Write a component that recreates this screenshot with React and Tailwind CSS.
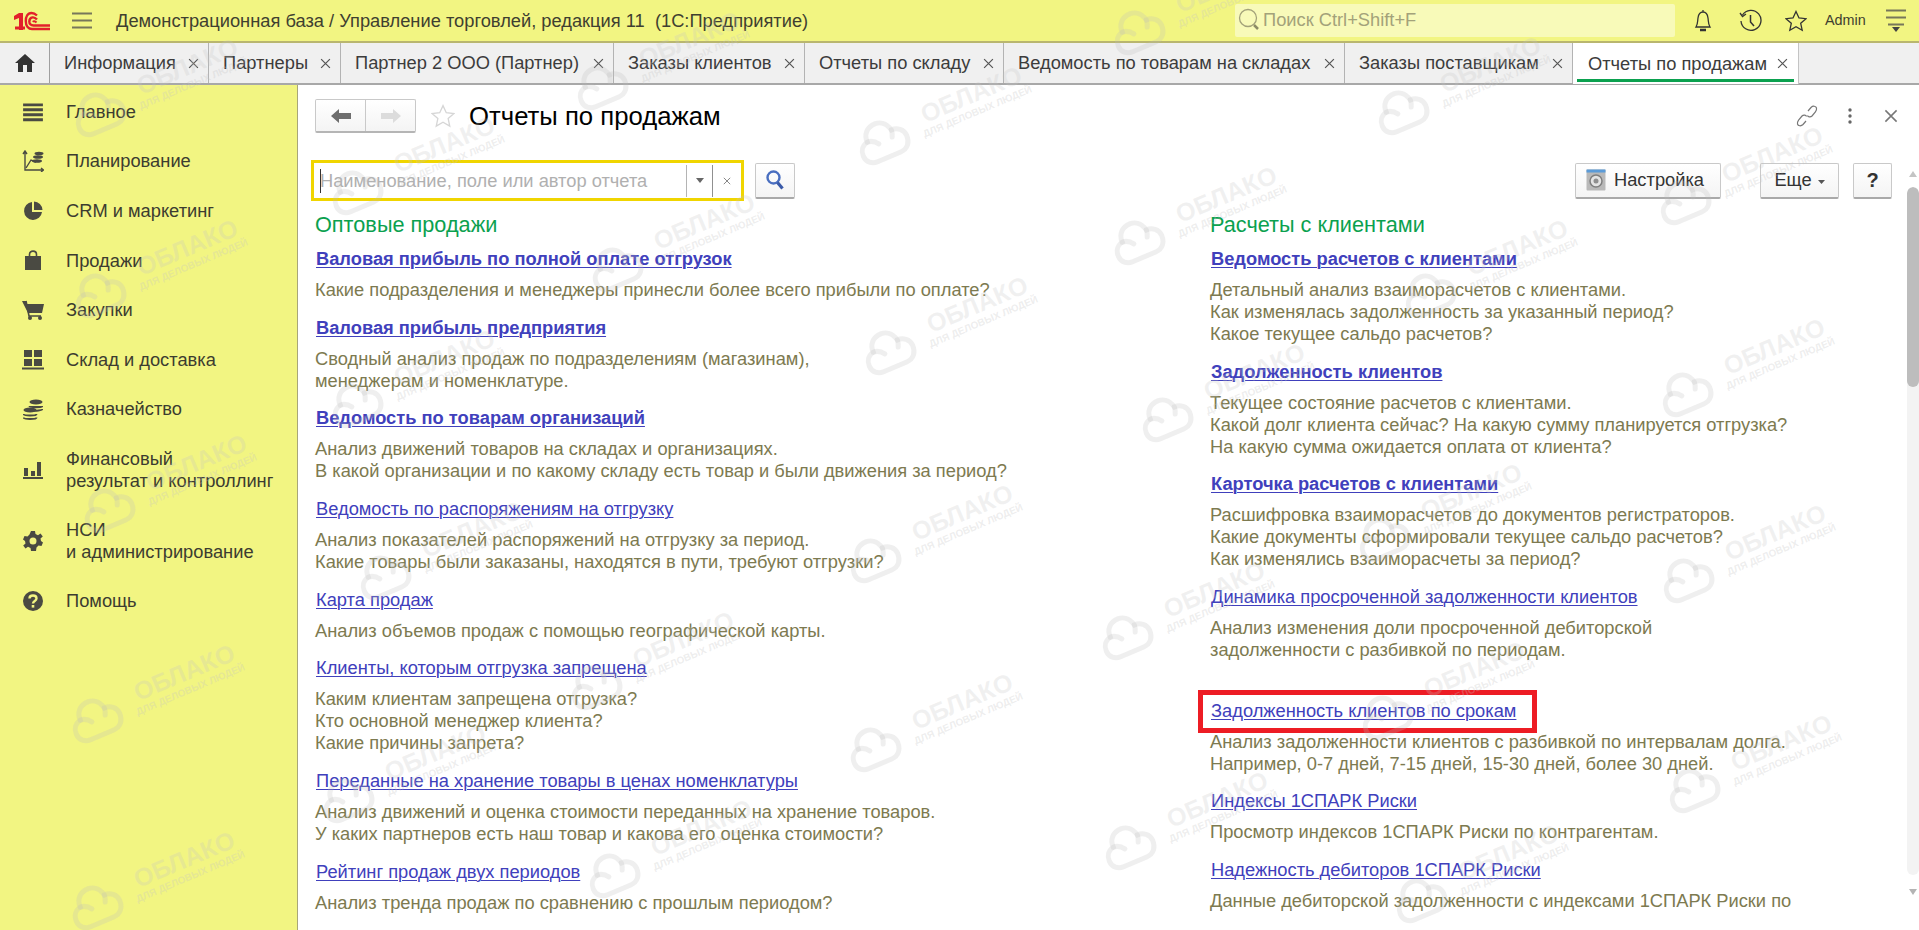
import React from "react";

const clouds = [
  [99,113],[99,294],[108,509],[96,719],[96,906],
  [356,191],[356,404],[384,576],[347,799],
  [601,86],[616,268],[595,686],[613,874],
  [883,141],[889,351],[874,559],[874,748],
  [1138,31],[1138,241],[1166,418],[1126,636],[1129,846],
  [1402,111],[1429,294],[1383,538],[1386,716],[1420,899],
  [1684,201],[1686,393],[1687,579],[1693,789],
];

function Watermark({ x, y }) {
  return (
    <div className="absolute w-0 h-0" style={{ left: x, top: y }}>
      <svg className="absolute -left-[27px] -top-[23px] -rotate-[23deg]" width="54" height="46" viewBox="0 0 54 46" fill="none" stroke="#bdbdbd" strokeOpacity="0.24" strokeWidth="5" strokeLinecap="round">
        <path d="M14 40H39C47 40 51 34 51 27C51 20 45 16 39 16C37 7 31 4 26 4C17 4 12 10 12 18C6 19 3 24 3 29C3 36 8 40 14 40" />
        <path d="M12 18C17 18 20 21 22 24M39 16C39 19 38 21 37 23" />
      </svg>
      <div className="absolute left-[33px] -top-[62px] w-[110px] text-center font-bold text-[25px] leading-[30px] text-[#c4c4c4]/25 -rotate-[23deg] whitespace-nowrap">ОБЛАКО</div>
      <div className="absolute left-[36px] -top-[35px] w-[116px] text-center font-bold text-[10px] leading-[12px] text-[#c4c4c4]/30 -rotate-[23deg] whitespace-nowrap">ДЛЯ ДЕЛОВЫХ ЛЮДЕЙ</div>
    </div>
  );
}

const Logo = () => (
  <svg width="38" height="20" viewBox="0 0 38 20" fill="none">
    <path d="M1 5L6 2H10V19H6V7L1 9Z" fill="#e2202b" />
    <path d="M2 17H12" stroke="#e2202b" strokeWidth="3" />
    <path d="M24 4.500C22 2.600 20 2 18.500 2C14.500 2 12.800 6 12.800 10C12.800 15 15.500 18 19 18H37" stroke="#e2202b" strokeWidth="2.400" />
    <path d="M24 8.500C22.500 6.800 21 6.200 19.500 6.400C17 6.800 16.300 9 16.300 10.500C16.300 13 18 14.500 20.500 14.500H37" stroke="#e2202b" strokeWidth="2.400" />
    <path d="M23.500 11.500C22 10 20.500 10 20 11" stroke="#e2202b" strokeWidth="2" />
  </svg>
);

const Lines = ({ w = 20, color = "#77775a" }) => (
  <svg width={w} height="17" viewBox="0 0 20 17">
    <path d="M0 1.500H20M0 8.500H20M0 15.500H20" stroke={color} strokeWidth="2" />
  </svg>
);

const X = ({ s = 11, c = "#555" }) => (
  <svg width={s} height={s} viewBox="0 0 10 10" className="shrink-0">
    <path d="M1 1L9 9M9 1L1 9" stroke={c} strokeWidth="1.100" />
  </svg>
);

const side = "#4a4a42";
const icons = {
  main: <svg width="22" height="20" viewBox="0 0 20 18"><path d="M1 2.500H19M1 7H19M1 11.500H19M1 16H19" stroke={side} strokeWidth="2.600" /></svg>,
  plan: <svg width="22" height="22" viewBox="0 0 22 22" fill="none"><path d="M3 1V20H21M1 4L3 1L5 4M19 18L21.500 20L19 22" stroke={side} strokeWidth="1.400"/><path d="M4 18L9 10L14 12" stroke={side} strokeWidth="1.400"/><ellipse cx="17" cy="3.500" rx="4.500" ry="1.800" fill={side}/><ellipse cx="16" cy="7" rx="5" ry="1.800" fill={side}/><ellipse cx="15" cy="11" rx="5" ry="1.800" fill={side}/></svg>,
  crm: <svg width="20" height="20" viewBox="0 0 20 20"><path d="M9 1A9 9 0 1 0 19 11H9Z" fill={side}/><path d="M11 0.500A9 9 0 0 1 19.500 9H11Z" fill={side}/></svg>,
  sales: <svg width="18" height="21" viewBox="0 0 18 21" fill="none"><path d="M1 6H17V20H1Z" fill={side}/><path d="M5.500 8V4.500C5.500 0 12.500 0 12.500 4.500V8" stroke={side} strokeWidth="1.600"/></svg>,
  buy: <svg width="22" height="20" viewBox="0 0 22 20"><path d="M0 1H4L5 4H22L20 13H6Z" fill={side}/><path d="M4 1L7 16H19" stroke={side} strokeWidth="1.600" fill="none"/><circle cx="8" cy="18" r="2" fill={side}/><circle cx="18" cy="18" r="2" fill={side}/></svg>,
  stock: <svg width="22" height="20" viewBox="0 0 22 20"><path d="M2 0H10V7H2ZM12 0H20V7H12ZM2 9H10V16H2ZM12 9H20V16H12ZM0 17.500H22V19.500H0Z" fill={side}/></svg>,
  money: <svg width="20" height="21" viewBox="0 0 20 21" fill="none"><ellipse cx="13" cy="3" rx="6.500" ry="2.500" fill={side}/><path d="M6.500 7C6.500 8.500 19.500 8.500 19.500 7M19.500 10C19.500 11.500 12 12 10 11.500" stroke={side} strokeWidth="2"/><ellipse cx="7" cy="11" rx="6.500" ry="2.500" fill={side}/><path d="M.5 15C.5 17 13.500 17 13.500 15M.5 18.500C.5 20.500 13.500 20.500 13.500 18.500" stroke={side} strokeWidth="2"/></svg>,
  fin: <svg width="20" height="18" viewBox="0 0 20 18"><path d="M1 7H5V15H1ZM8 10H12V15H8ZM14 1H18V15H14ZM0 16H20V18H0Z" fill={side}/></svg>,
  nsi: <svg width="20" height="20" viewBox="0 0 20 20"><path fillRule="evenodd" d="M8 0H12L12.500 3L15 4.200L17.500 2.500L19.800 5.500L17.500 7.500L18 10L20 11.500L18.500 15L15.500 14.500L13.500 16.500L13 20H8L7.500 17L5 15.800L2.500 17.500L.2 14.500L2.500 12.500L2 10L0 8.500L1.500 5L4.500 5.500L6.500 3.500ZM10 6.500A3.500 3.500 0 1 0 10 13.500A3.500 3.500 0 1 0 10 6.500Z" fill={side}/></svg>,
  help: <svg width="20" height="20" viewBox="0 0 20 20"><circle cx="10" cy="10" r="10" fill={side}/><path d="M6.500 7.500C6.500 3.500 13.500 3.500 13.500 7.500C13.500 10 10 10 10 12.500" stroke="#f2f582" strokeWidth="2.400" fill="none"/><rect x="8.700" y="14" width="2.600" height="2.600" fill="#f2f582"/></svg>,
};

const menu = [
  ["main", ["Главное"], "h-[49.600px]"],
  ["plan", ["Планирование"], "h-[49.600px]"],
  ["crm", ["CRM и маркетинг"], "h-[49.600px]"],
  ["sales", ["Продажи"], "h-[49.600px]"],
  ["buy", ["Закупки"], "h-[49.600px]"],
  ["stock", ["Склад и доставка"], "h-[49.600px]"],
  ["money", ["Казначейство"], "h-[49.600px]"],
  ["fin", ["Финансовый", "результат и контроллинг"], "h-[71px]"],
  ["nsi", ["НСИ", "и администрирование"], "h-[71px]"],
  ["help", ["Помощь"], "h-[49.600px]"],
];

const tabs = [
  ["Информация", "w-[159px]"],
  ["Партнеры", "w-[132px]"],
  ["Партнер 2 ООО (Партнер)", "w-[273px]"],
  ["Заказы клиентов", "w-[191px]"],
  ["Отчеты по складу", "w-[199px]"],
  ["Ведомость по товарам на складах", "w-[341px]"],
  ["Заказы поставщикам", "w-[228px]"],
];

const left = [
  ["Валовая прибыль по полной оплате отгрузок", true, ["Какие подразделения и менеджеры принесли более всего прибыли по оплате?"]],
  ["Валовая прибыль предприятия", true, ["Сводный анализ продаж по подразделениям (магазинам),", "менеджерам и номенклатуре."]],
  ["Ведомость по товарам организаций", true, ["Анализ движений товаров на складах и организациях.", "В какой организации и по какому складу есть товар и были движения за период?"]],
  ["Ведомость по распоряжениям на отгрузку", false, ["Анализ показателей распоряжений на отгрузку за период.", "Какие товары были заказаны, находятся в пути, требуют отгрузки?"]],
  ["Карта продаж", false, ["Анализ объемов продаж с помощью географической карты."]],
  ["Клиенты, которым отгрузка запрещена", false, ["Каким клиентам запрещена отгрузка?", "Кто основной менеджер клиента?", "Какие причины запрета?"]],
  ["Переданные на хранение товары в ценах номенклатуры", false, ["Анализ движений и оценка стоимости переданных на хранение товаров.", "У каких партнеров есть наш товар и какова его оценка стоимости?"]],
  ["Рейтинг продаж двух периодов", false, ["Анализ тренда продаж по сравнению с прошлым периодом?"]],
];

const right = [
  ["Ведомость расчетов с клиентами", true, ["Детальный анализ взаиморасчетов с клиентами.", "Как изменялась задолженность за указанный период?", "Какое текущее сальдо расчетов?"]],
  ["Задолженность клиентов", true, ["Текущее состояние расчетов с клиентами.", "Какой долг клиента сейчас? На какую сумму планируется отгрузка?", "На какую сумма ожидается оплата от клиента?"]],
  ["Карточка расчетов с клиентами", true, ["Расшифровка взаиморасчетов до документов регистраторов.", "Какие документы сформировали текущее сальдо расчетов?", "Как изменялись взаиморасчеты за период?"]],
  ["Динамика просроченной задолженности клиентов", false, ["Анализ изменения доли просроченной дебиторской", "задолженности с разбивкой по периодам."], "mb-[38.700px]"],
  ["Задолженность клиентов по срокам", false, ["Анализ задолженности клиентов с разбивкой по интервалам долга.", "Например, 0-7 дней, 7-15 дней, 15-30 дней, более 30 дней."], "", true],
  ["Индексы 1СПАРК Риски", false, ["Просмотр индексов 1СПАРК Риски по контрагентам."]],
  ["Надежность дебиторов 1СПАРК Риски", false, ["Данные дебиторской задолженности с индексами 1СПАРК Риски по"]],
];

function Item({ item }) {
  const [title, bold, lines, extra, marked] = item;
  return (
    <div className={extra || "mb-[15.700px]"}>
      <div className="relative mb-[9px] h-[22px] leading-[22px] pl-[1px]">
        <a className={`underline underline-offset-2 decoration-1 text-[#4040bc] whitespace-nowrap ${bold ? "font-bold" : ""}`}>{title}</a>
        {marked && <div className="absolute -left-[12px] -top-[10px] w-[339px] h-[43px] border-[5px] border-[#ed1c24]" />}
      </div>
      {lines.map((l) => (
        <div key={l} className="h-[22px] leading-[22px] text-[#7d7a50] whitespace-nowrap">{l}</div>
      ))}
    </div>
  );
}

function Column({ title, items, className }) {
  return (
    <div className={className}>
      <div className="text-[21.700px] leading-[26px] h-[26px] text-[#0ba14f] mb-[10px]">{title}</div>
      {items.map((i) => <Item key={i[0]} item={i} />)}
    </div>
  );
}

const btn = "flex items-center justify-center h-[35px] rounded-[2px] border border-[#c9c9c9] border-b-[#a9a9a9] border-b-2 bg-gradient-to-b from-white to-[#f4f4f4] text-[#333]";

export default function App() {
  return (
    <div className="relative h-[930px] overflow-hidden bg-white text-[18.300px] font-['Liberation_Sans',Arial,sans-serif]">
      <header className="flex items-center h-[43px] bg-[#f2f582] border-b-2 border-b-[#b9b66f] text-[#3f3f30]">
        <div className="ml-[13px] w-[38px] flex"><Logo /></div>
        <div className="ml-[21px] flex"><Lines /></div>
        <div className="ml-[24px] whitespace-pre">Демонстрационная база / Управление торговлей, редакция 11  (1С:Предприятие)</div>
        <div className="ml-auto w-[440px] h-[33px] -mt-[1px] rounded-[2px] bg-[#f8fab9] flex items-center text-[#a3a27a]">
          <svg width="24" height="26" viewBox="0 0 24 26" fill="none" className="ml-[3px]"><circle cx="10" cy="11" r="8.500" stroke="#a3a27a" strokeWidth="1.300"/><path d="M16 18L20 22" stroke="#8c8b66" strokeWidth="2.500"/></svg>
          <span className="ml-[1px]">Поиск Ctrl+Shift+F</span>
        </div>
        <div className="ml-[18px] w-[20px] flex">
          <svg width="20" height="26" viewBox="0 0 20 26" fill="none" stroke="#333" strokeWidth="1.300"><path d="M10 2V4M3 19C5 16 4.500 13 5 10C5.500 6 7.500 4 10 4C12.500 4 14.500 6 15 10C15.500 13 15 16 17 19Z"/><path d="M7 22H13" strokeWidth="2.500"/></svg>
        </div>
        <div className="ml-[25px] w-[26px] flex">
          <svg width="24" height="24" viewBox="0 0 24 24" fill="none" stroke="#333" strokeWidth="1.300"><path d="M4.500 6A10 10 0 1 1 3 12"/><path d="M2 4L4.500 7.500L8 5" /><path d="M12.500 6V13L16 17" strokeWidth="1.500"/></svg>
        </div>
        <div className="ml-[21px] w-[22px] flex">
          <svg width="22" height="22" viewBox="0 0 22 22" fill="none" stroke="#333" strokeWidth="1.300"><path d="M11 1.500L14 8L21 8.700L15.700 13.300L17.200 20.300L11 16.700L4.800 20.300L6.300 13.300L1 8.700L8 8Z"/></svg>
        </div>
        <div className="ml-[18px] text-[14.400px] w-[43px]">Admin</div>
        <div className="ml-[18px] mr-[13px] w-[20px] flex flex-col items-center">
          <svg width="20" height="24" viewBox="0 0 20 24"><path d="M0 1.500H20M0 8.500H20M2 15.500H18" stroke="#77775a" strokeWidth="1.800"/><path d="M6 18H14L10 23Z" fill="#444"/></svg>
        </div>
      </header>

      <nav className="flex h-[42px] bg-[#f0f0f0] border-b-2 border-b-[#a8a8a8] text-[#3c3c3c]">
        <div className="w-[50px] shrink-0 border-r border-r-[#9f9f9f] flex items-center justify-center">
          <svg width="20" height="18" viewBox="0 0 20 18"><path d="M10 0L20 9H17V18H12V11H8V18H3V9H0Z" fill="#333"/></svg>
        </div>
        {tabs.map(([t, w]) => (
          <div key={t} className={`${w} shrink-0 border-r border-r-[#b3b3b3] pl-[14px] pr-[9px] flex items-center justify-between whitespace-nowrap`}>
            <span>{t}</span><X />
          </div>
        ))}
        <div className="relative w-[226px] shrink-0 -mb-[1px] bg-white border-r border-r-[#c4c4c4] pl-[15px] pr-[10px] flex items-center justify-between whitespace-nowrap">
          <span>Отчеты по продажам</span><X />
          <div className="absolute left-[4px] right-[4px] bottom-[2px] h-[3px] bg-[#0ba14f]" />
        </div>
      </nav>

      <div className="flex h-[845px]">
        <aside className="w-[298px] shrink-0 bg-[#f2f582] border-r border-r-[#a8a679] pt-[2px] text-[#3c3c30]">
          {menu.map(([ic, lines, h]) => (
            <div key={ic} className={`flex items-center ${h}`}>
              <div className="w-[66px] pl-[22px] pr-[22px] flex items-center justify-center shrink-0">{icons[ic]}</div>
              <div className="leading-[22px] whitespace-nowrap">{lines.map((l) => <div key={l}>{l}</div>)}</div>
            </div>
          ))}
        </aside>

        <main className="relative flex-1 min-w-0">
          <div className="flex items-center h-[34px] mt-[14px] pl-[17px] pr-[21px]">
            <div className="flex w-[101px] h-[34px] rounded-[2px] border border-[#c9c9c9] border-b-2 border-b-[#b5b5b5] bg-gradient-to-b from-white to-[#f4f4f4]">
              <div className="w-[50px] border-r border-r-[#c9c9c9] flex items-center justify-center">
                <svg width="20" height="14" viewBox="0 0 20 14"><path d="M8 0V4H20V10H8V14L0 7Z" fill="#6e6e6e"/></svg>
              </div>
              <div className="flex-1 flex items-center justify-center">
                <svg width="20" height="14" viewBox="0 0 20 14"><path d="M12 0V4H0V10H12V14L20 7Z" fill="#dcdcdc"/></svg>
              </div>
            </div>
            <svg width="24" height="24" viewBox="0 0 22 22" fill="none" stroke="#d6d6d6" strokeWidth="1.200" className="ml-[15px]"><path d="M11 1.500L14 8L21 8.700L15.700 13.300L17.200 20.300L11 16.700L4.800 20.300L6.300 13.300L1 8.700L8 8Z"/></svg>
            <h1 className="ml-[14px] text-[25.700px] text-black leading-[30px] whitespace-nowrap">Отчеты по продажам</h1>
            <svg width="22" height="26" viewBox="0 0 22 26" fill="none" stroke="#777" strokeWidth="1.200" className="ml-auto"><path d="M12 8L15 4.500C17 2.500 20 3 20.500 5C21 7 20 8 19 9.500L16 13C14.500 14.500 12 14 11.500 12.500M10 18L7 21.500C5 23.500 2 23 1.500 21C1 19 2 18 3 16.500L6 13C7.500 11.500 10 12 10.500 13.500"/></svg>
            <svg width="4" height="18" viewBox="0 0 4 18" className="ml-[30px]"><circle cx="2" cy="3" r="1.700" fill="#666"/><circle cx="2" cy="9" r="1.700" fill="#666"/><circle cx="2" cy="15" r="1.700" fill="#666"/></svg>
            <div className="ml-[32px] flex"><X s={14} c="#777" /></div>
          </div>

          <div className="flex items-center h-[41px] mt-[27px] pl-[13px] pr-[27px]">
            <div className="relative flex items-center w-[433px] h-[41px] border-[3px] border-[#f0d500] bg-white">
              <div className="absolute left-[6px] top-[6px] w-[1px] h-[24px] bg-[#333]" />
              <span className="ml-[6px] text-[#b0b0b0] whitespace-nowrap w-[366px]">Наименование, поле или автор отчета</span>
              <div className="w-[27px] h-[32px] border-l border-r border-l-[#b4b4b4] border-r-[#909090] flex items-center justify-center">
                <svg width="8" height="5" viewBox="0 0 8 5"><path d="M0 0H8L4 5Z" fill="#666"/></svg>
              </div>
              <div className="flex-1 flex justify-center"><X s={8} c="#777" /></div>
            </div>
            <div className={`${btn} ml-[11px] w-[40px] h-[36px]`}>
              <svg width="20" height="22" viewBox="0 0 20 22" fill="none"><circle cx="8.500" cy="8.500" r="6" stroke="#4a6fc0" strokeWidth="2.400"/><path d="M12.500 13.500L17.500 19.500" stroke="#3a5aa8" strokeWidth="3.200"/></svg>
            </div>
            <div className={`${btn} ml-auto w-[146px] h-[36px] justify-start`}>
              <svg width="20" height="22" viewBox="0 0 20 22" className="ml-[10px]"><rect x="0.500" y="0.500" width="19" height="21" rx="1" fill="#b9b9b9"/><rect x="0.500" y="0.500" width="19" height="3" fill="#5b9bd8"/><circle cx="10" cy="12" r="6" fill="#e4e4e4" stroke="#7f7f7f" strokeWidth="1.500"/><circle cx="10" cy="12" r="2.500" fill="#8f8f8f"/></svg>
              <span className="ml-[8px]">Настройка</span>
            </div>
            <div className={`${btn} ml-[39px] w-[79px] h-[36px]`}>
              <span>Еще</span>
              <svg width="7" height="4" viewBox="0 0 7 4" className="ml-[6px] mt-[3px]"><path d="M0 0H7L3.500 4Z" fill="#555"/></svg>
            </div>
            <div className={`${btn} ml-[14px] w-[39px] h-[36px] font-bold text-[20px]`}>?</div>
          </div>

          <div className="flex pl-[17px] mt-[11px]">
            <Column title="Оптовые продажи" items={left} className="w-[895px] shrink-0" />
            <Column title="Расчеты с клиентами" items={right} className="flex-1 min-w-0" />
          </div>

          <div className="absolute right-0 top-[85px] bottom-0 w-[12px] flex flex-col items-center">
            <svg width="8" height="6" viewBox="0 0 8 6" className="mt-[1px]"><path d="M0 6H8L4 0Z" fill="#c4c4c4"/></svg>
            <div className="mt-[10px] w-[12px] h-[688px] rounded-full bg-[#f3f3f3] overflow-hidden">
              <div className="w-[12px] h-[200px] rounded-full bg-[#bdbdbd]" />
            </div>
            <svg width="8" height="6" viewBox="0 0 8 6" className="mt-[14px]"><path d="M0 0H8L4 6Z" fill="#b4b4b4"/></svg>
          </div>
        </main>
      </div>

      <div className="absolute inset-0 z-10 pointer-events-none overflow-hidden">
        {clouds.map(([x, y]) => <Watermark key={`${x}-${y}`} x={x} y={y} />)}
      </div>
    </div>
  );
}
